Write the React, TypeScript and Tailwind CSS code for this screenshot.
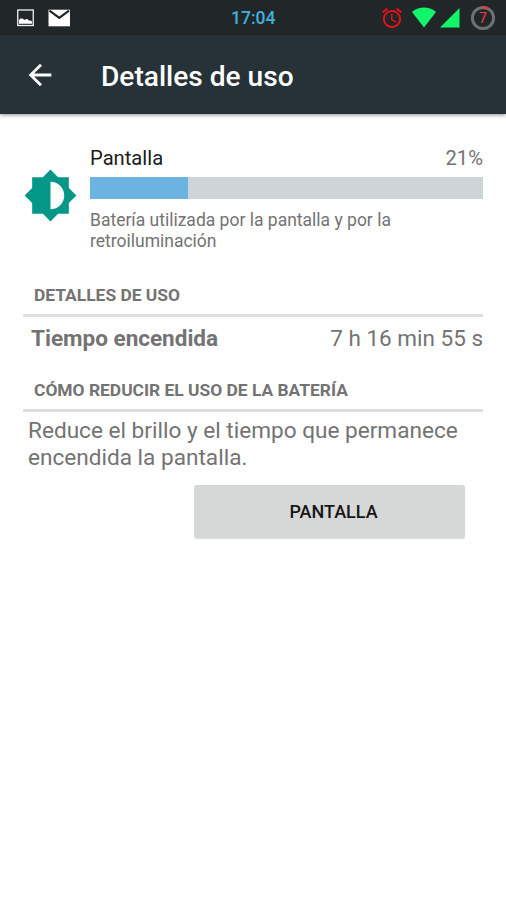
import type { ReactNode } from "react";

const batteryUsage = {
  title: "Pantalla",
  percent: 21,
  barWidth: 25,
  summary: "Batería utilizada por la pantalla y por la retroiluminación",
};

const StatusBar = () => {
  return (
    <div className="relative flex h-[35px] items-center bg-[#212729]">
      <svg className="ml-[17px]" width="17" height="18" viewBox="0 0 17 18">
        <rect x="0.75" y="1" width="15.5" height="15.5" fill="none" stroke="#f2f2f2" strokeWidth="1.3" />
        <path d="M2 14.8V11l1.5-1.6h2L7.6 11l1.6-1 1.5.2 1.6 1.6 1.4-.4 1.3 1.2v2.2z" fill="#fff" />
      </svg>
      <svg className="ml-[14px]" width="23" height="18" viewBox="0 0 23 18">
        <rect x="0.5" y="0.7" width="21.5" height="16.6" fill="#fff" />
        <path d="M1.5 1.6l9.8 7.2 9.7-7.2" fill="none" stroke="#212729" strokeWidth="2.2" />
      </svg>
      <span className="absolute left-[231px] text-[17.5px] leading-[22px] font-medium text-[#44afd9]">
        17:04
      </span>
      <div className="ml-auto flex items-center pr-[10px]">
        <svg width="24" height="24" viewBox="0 0 24 24" fill="#e01414">
          <path d="M22 5.72l-4.6-3.86-1.29 1.53 4.6 3.86L22 5.72zM7.88 3.39L6.6 1.86 2 5.71l1.29 1.53 4.59-3.85zM12.5 8H11v6l4.75 2.85.75-1.23-4-2.37V8zM12 4c-4.97 0-9 4.03-9 9s4.02 9 9 9c4.97 0 9-4.03 9-9s-4.03-9-9-9zm0 16c-3.87 0-7-3.13-7-7s3.13-7 7-7 7 3.13 7 7-3.13 7-7 7z" />
        </svg>
        <svg className="ml-[8px]" width="24" height="21" viewBox="0 0 24 21">
          <path d="M12 20.5L0 5C3 2 7.3.5 12 .5S21 2 24 5z" fill="#12f56b" />
        </svg>
        <svg className="ml-[4px]" width="20" height="21" viewBox="0 0 20 21">
          <path d="M0 20.5L19.5 1v19.5z" fill="#12f56b" />
        </svg>
        <svg className="ml-[10px]" width="26" height="26" viewBox="0 0 26 26">
          <circle cx="13" cy="13" r="10.6" fill="none" stroke="#6d7173" strokeWidth="3" />
          <path d="M13 2.4a10.6 10.6 0 0 1 4.5 1" fill="none" stroke="#e5383c" strokeWidth="3" />
          <text x="13" y="17.5" textAnchor="middle" fontSize="14" fill="#ee3d42">
            7
          </text>
        </svg>
      </div>
    </div>
  );
};

const Toolbar = ({ title }: { title: string }) => {
  return (
    <header className="relative flex h-[79px] items-center bg-[#263238] shadow-[0_1px_4px_rgba(0,0,0,0.45)]">
      <svg className="ml-[23px]" width="34" height="34" viewBox="0 0 24 24" fill="#fff">
        <path d="M20 11H7.83l5.59-5.59L12 4l-8 8 8 8 1.41-1.41L7.83 13H20v-2z" />
      </svg>
      <h1 className="ml-[44px] pt-[4px] text-[28.1px] leading-[34px] font-medium text-white">{title}</h1>
    </header>
  );
};

const SectionHeader = ({ children }: { children: ReactNode }) => {
  return (
    <h2 className="h-[32px] border-b-[3px] border-[#dedede] pl-[11px] text-[17.4px] leading-[20px] font-bold">
      {children}
    </h2>
  );
};

const App = () => {
  return (
    <div
      className="min-h-[900px] w-[506px] bg-white text-[#737373]"
      style={{ fontFamily: 'Roboto, "Liberation Sans", sans-serif' }}
    >
      <StatusBar />
      <Toolbar title="Detalles de uso" />

      <main className="pr-[23px] pl-[23px]">
        <section className="flex h-[171px] pt-[32px]">
          <svg className="mt-[22px] shrink-0" width="55" height="55" viewBox="0 0 24 24" fill="#049687">
            <path d="M20 15.31L23.31 12 20 8.69V4h-4.69L12 .69 8.69 4H4v4.69L.69 12 4 15.31V20h4.69L12 23.31 15.31 20H20v-4.69zM12 18V6c3.31 0 6 2.69 6 6s-2.69 6-6 6z" />
          </svg>
          <div className="ml-[12px] grow">
            <div className="flex justify-between text-[20.2px] leading-[24px]">
              <span className="text-[#1c1c1c]">{batteryUsage.title}</span>
              <span>{batteryUsage.percent}%</span>
            </div>
            <div className="mt-[7px] h-[22px] bg-[#cdd5d8]">
              <div className="h-full bg-[#6bb4e1]" style={{ width: `${batteryUsage.barWidth}%` }} />
            </div>
            <p className="mt-[11px] w-[320px] text-[17.5px] leading-[21px]">{batteryUsage.summary}</p>
          </div>
        </section>

        <SectionHeader>DETALLES DE USO</SectionHeader>
        <div className="flex h-[63px] justify-between pt-[7px] pl-[8px] text-[22.5px] leading-[28px]">
          <span className="font-bold">Tiempo encendida</span>
          <span>7 h 16 min 55 s</span>
        </div>

        <SectionHeader>CÓMO REDUCIR EL USO DE LA BATERÍA</SectionHeader>
        <p className="mt-[5px] w-[450px] pl-[5px] text-[22.6px] leading-[27px]">
          Reduce el brillo y el tiempo que permanece encendida la pantalla.
        </p>
        <button className="mt-[14px] ml-[171px] block h-[53px] w-[271px] rounded-[3px] bg-[#d5d8d7] pl-[8px] text-[18px] font-medium text-[#161616] shadow-[0_1px_1px_rgba(0,0,0,0.15)]">
          PANTALLA
        </button>
      </main>
    </div>
  );
};

export default App;
